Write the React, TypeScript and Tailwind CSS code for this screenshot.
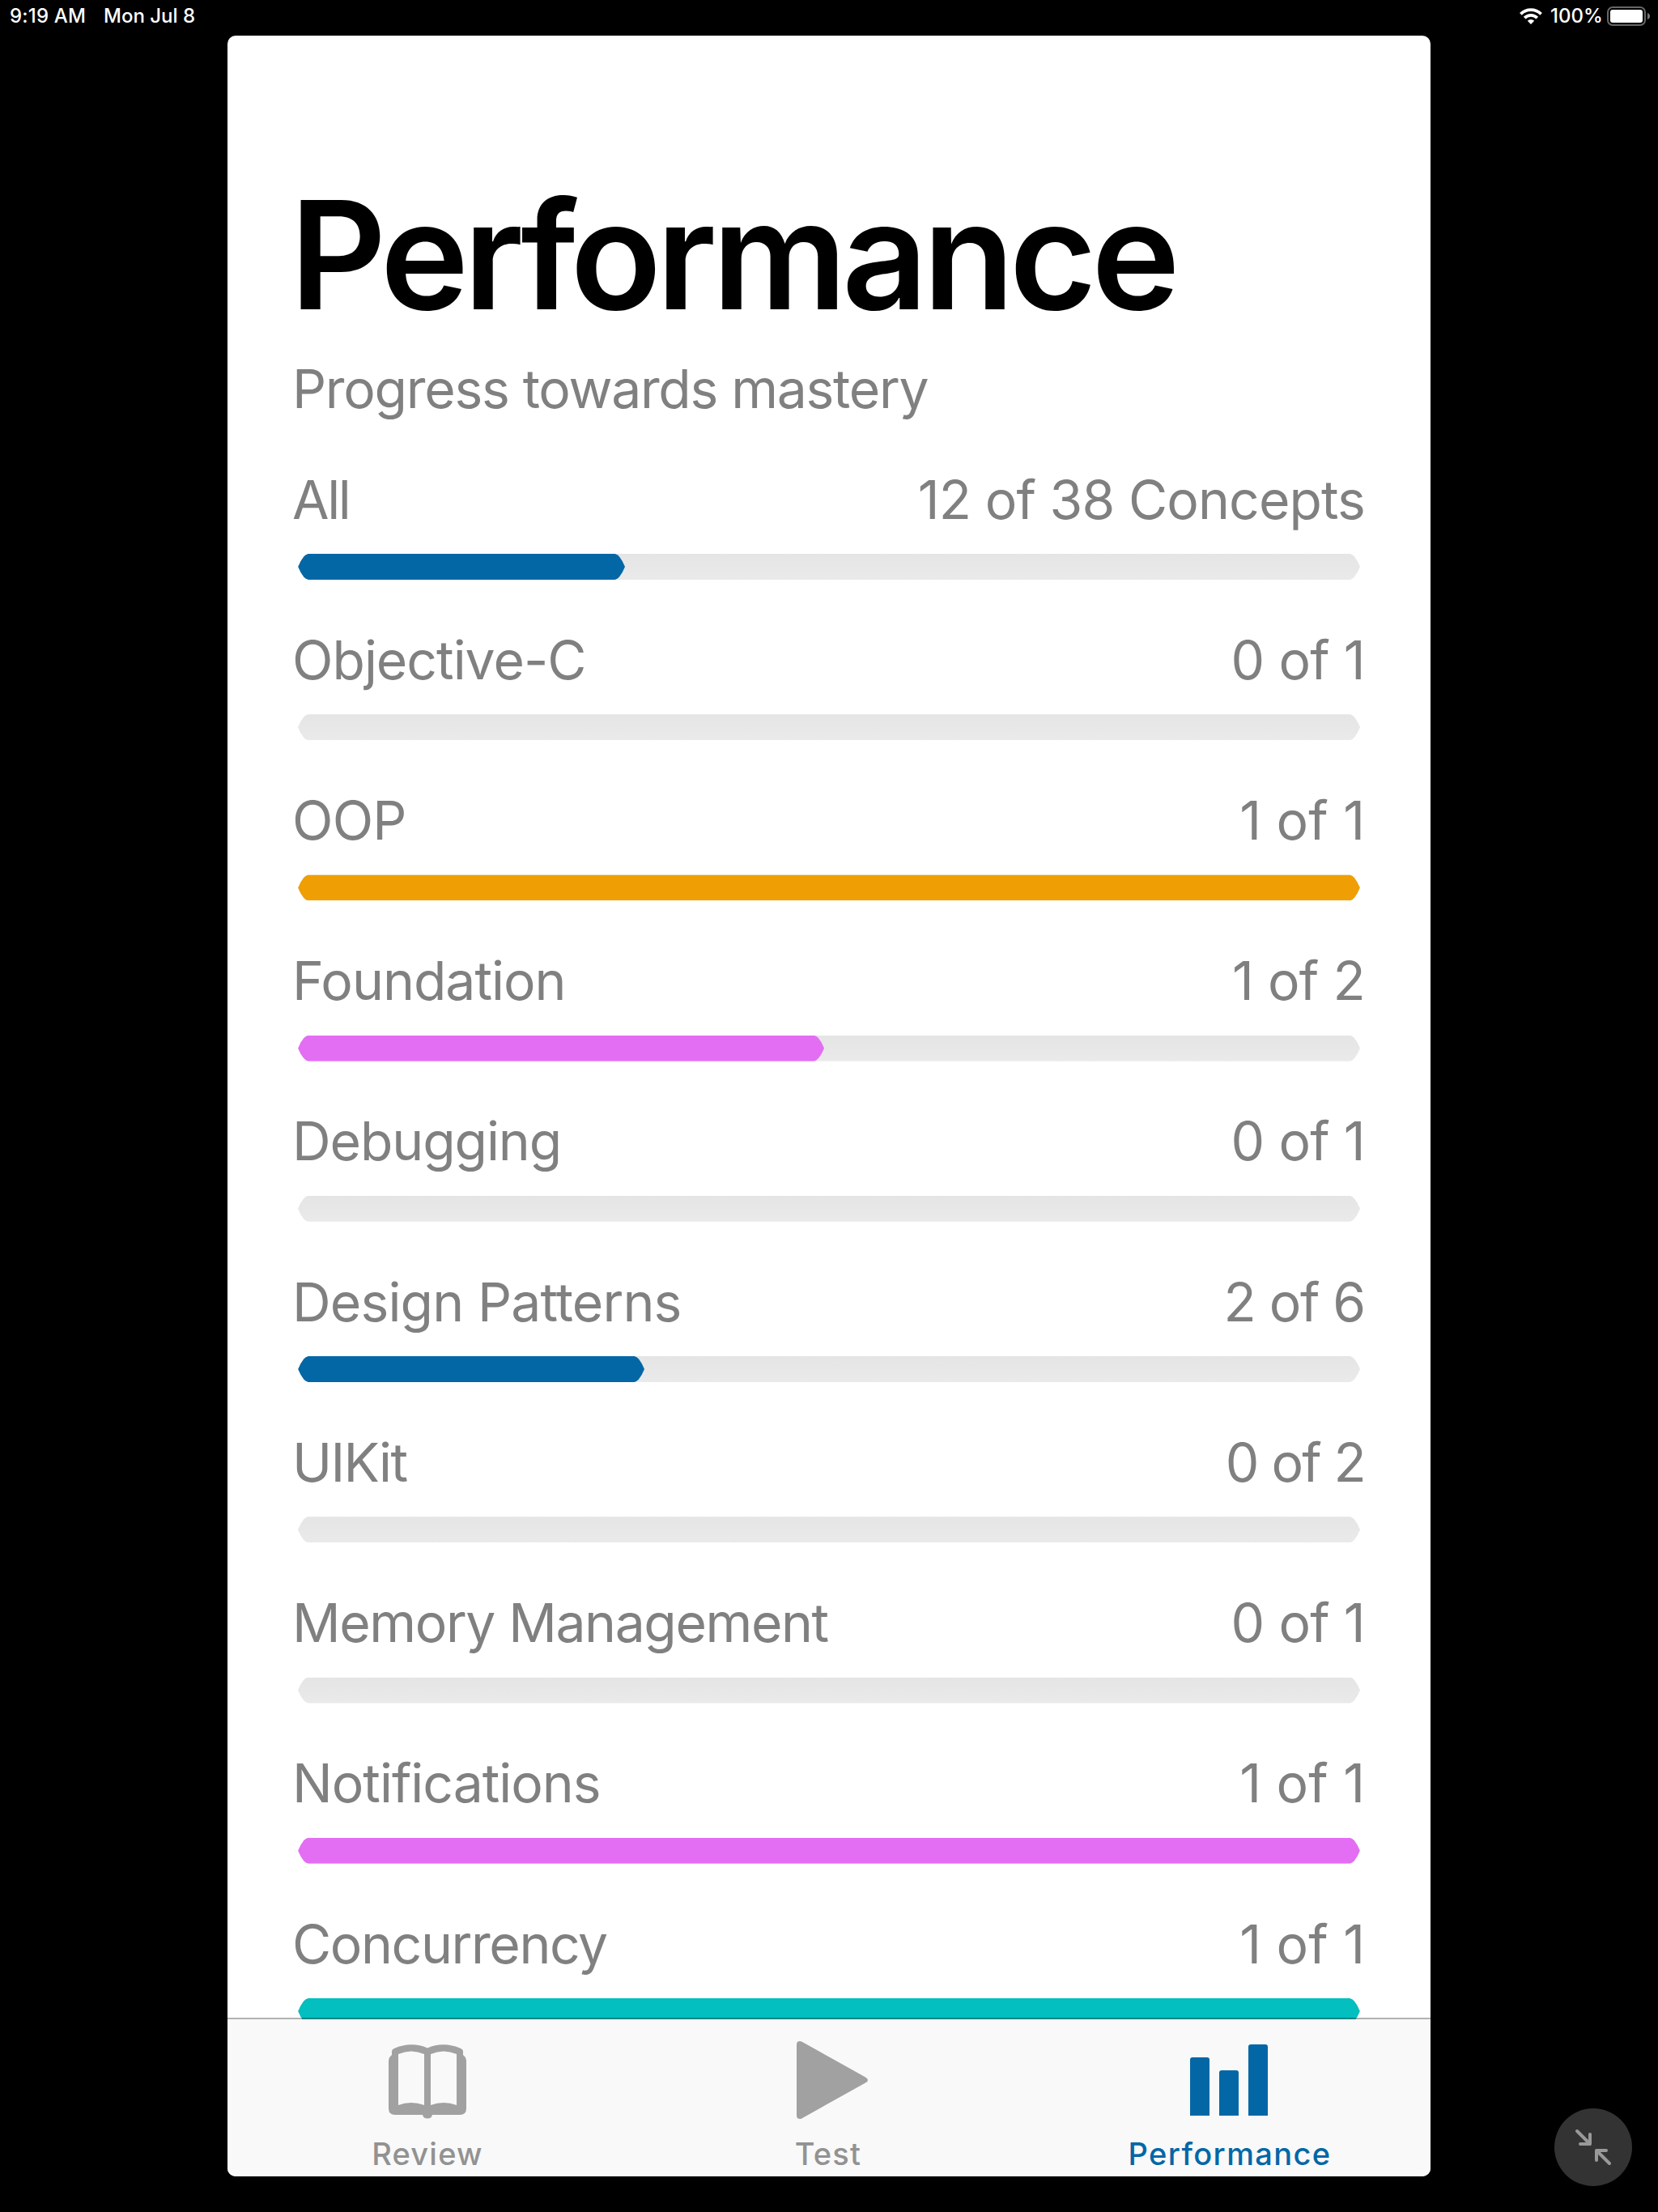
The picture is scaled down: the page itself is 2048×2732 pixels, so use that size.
import React from "react";

type Row = { name: string; score: string; fill: number; color: string; nameFit: string; scoreFit: string };

const rows: Row[] = [
  { name: "All", score: "12 of 38 Concepts", fill: 404, color: "bg-[#0367a6]", nameFit: "tracking-[-2.4px]", scoreFit: "tracking-[-0.9px]" },
  { name: "Objective-C", score: "0 of 1", fill: 0, color: "", nameFit: "tracking-[-1px]", scoreFit: "tracking-[-0.7px]" },
  { name: "OOP", score: "1 of 1", fill: 1312, color: "bg-[#ef9f04]", nameFit: "tracking-[-0.8px]", scoreFit: "" },
  { name: "Foundation", score: "1 of 2", fill: 650, color: "bg-[#e36ef3]", nameFit: "tracking-[-1px]", scoreFit: "tracking-[-0.7px]" },
  { name: "Debugging", score: "0 of 1", fill: 0, color: "", nameFit: "tracking-[-1.1px]", scoreFit: "tracking-[-0.7px]" },
  { name: "Design Patterns", score: "2 of 6", fill: 428, color: "bg-[#0367a6]", nameFit: "tracking-[-0.85px]", scoreFit: "tracking-[-1.3px]" },
  { name: "UIKit", score: "0 of 2", fill: 0, color: "", nameFit: "tracking-[-1.7px]", scoreFit: "tracking-[-1.8px]" },
  { name: "Memory Management", score: "0 of 1", fill: 0, color: "", nameFit: "tracking-[-1.4px]", scoreFit: "tracking-[-0.7px]" },
  { name: "Notifications", score: "1 of 1", fill: 1312, color: "bg-[#e36ef3]", nameFit: "tracking-[-1px]", scoreFit: "" },
  { name: "Concurrency", score: "1 of 1", fill: 1312, color: "bg-[#04bfbf]", nameFit: "tracking-[-1.4px]", scoreFit: "" },
];

const capsule =
  "[clip-path:polygon(0_50%,3.3px_28%,7px_11%,9.5px_4%,12.5px_0,calc(100%-12.5px)_0,calc(100%-9.5px)_4%,calc(100%-7px)_11%,calc(100%-3.3px)_28%,100%_50%,calc(100%-3.3px)_72%,calc(100%-7px)_89%,calc(100%-9.5px)_96%,calc(100%-12.5px)_100%,12.5px_100%,9.5px_96%,7px_89%,3.3px_72%)]";

function ProgressRow({ row }: { row: Row }) {
  return (
    <div className="h-[198.22px] shrink-0">
      <div className="flex h-20 justify-between whitespace-nowrap text-[66px] leading-20 text-[#808080]">
        <span className={row.nameFit}>{row.name}</span>
        <span className={row.scoreFit}>{row.score}</span>
      </div>
      <div className={`mt-[27.4px] ml-[7px] h-8 w-[1312px] bg-linear-to-b from-[#e5e5e5] to-[#eaeaea] ${capsule}`}>
        {row.fill > 0 && <div className={`h-8 ${row.color} ${capsule}`} style={{ width: row.fill }} />}
      </div>
    </div>
  );
}

function StatusBar() {
  return (
    <header className="flex h-[44px] items-start justify-between pr-[10px] pl-3 text-[24px] leading-[39px] font-medium text-white">
      <div className="flex whitespace-nowrap">
        <span className="w-[116px] tracking-[0.2px]">9:19 AM</span>
        <span>Mon Jul 8</span>
      </div>
      <div className="flex">
        <svg className="mt-[10px] mr-[10px]" width="28" height="20" viewBox="0 0 28 20">
          <g fill="none" stroke="#fff" strokeWidth="3.8">
            <path d="M1.4 7.3a17.9 17.9 0 0 1 25.2 0" />
            <path d="M6.2 12.1a11 11 0 0 1 15.6 0" />
          </g>
          <path d="M14 20l-4.2-4.3a6 6 0 0 1 8.4 0z" fill="#fff" />
        </svg>
        <span className="w-[70px] whitespace-nowrap">100%</span>
        <svg className="mt-2" width="53" height="24" viewBox="0 0 53 24">
          <rect x="1" y="1" width="46" height="22" rx="6" fill="none" stroke="#666" strokeWidth="2" />
          <rect x="4" y="4" width="40" height="16" rx="3" fill="#fff" />
          <path d="M50 8c4 1.2 4 6.8 0 8z" fill="#777" />
        </svg>
      </div>
    </header>
  );
}

function BookIcon() {
  return (
    <svg width="96" height="92" viewBox="0 0 96 92">
      <path
        fillRule="evenodd"
        fill="#a1a1a1"
        d="M4 9Q4 6 7 5Q28-4 48 4.500Q68-4 89 5Q92 6 92 9V13Q96 16 96 20V79Q96 87 88 87H54Q53 91.500 48 91.500Q43 91.500 42 87H8Q0 87 0 79V20Q0 16 4 13ZM12 12V75Q28 69 44 75V12Q28 5 12 12ZM52 12V75Q68 69 84 75V12Q68 5 52 12Z"
      />
    </svg>
  );
}

function TabBar() {
  return (
    <nav className="relative -mt-[2px] grid h-[196px] grid-cols-[494px_496px_496px] border-t-2 border-black/30 bg-[#f9f9f9] bg-clip-padding text-[38px] leading-[48px] font-medium tracking-[1.2px] text-[#929292]">
      <div className="flex flex-col items-center">
        <div className="mt-[31px] flex h-[111px] items-start"><BookIcon /></div>
        <span>Review</span>
      </div>
      <div className="flex flex-col items-center">
        <div className="mt-[27px] flex h-[115px] items-start pl-[10px]">
          <svg width="88" height="96" viewBox="0 0 88 96">
            <path d="M0 4Q0 0 4 0Q6 0 8 1.500L85 44.500Q88 46 88 48Q88 50 85 51.500L8 94.500Q6 96 4 96Q0 96 0 92Z" fill="#a1a1a1" />
          </svg>
        </div>
        <span>Test</span>
      </div>
      <div className="flex flex-col items-center text-[#0367a6]">
        <div className="mt-[31px] flex h-[111px] items-start pr-[3px]">
          <svg width="96" height="88" viewBox="0 0 96 88" fill="#0367a6">
            <path d="M0 88V19Q0 16 3 16H21Q24 16 24 19V88Z" />
            <path d="M36 88V35Q36 32 39 32H57Q60 32 60 35V88Z" />
            <path d="M72 88V3Q72 0 75 0H93Q96 0 96 3V88Z" />
          </svg>
        </div>
        <span className="tracking-[1.4px]">Performance</span>
      </div>
    </nav>
  );
}

export default function App() {
  return (
    <div className="relative h-[2732px] w-[2048px] overflow-hidden bg-black font-['Inter',sans-serif]">
      <StatusBar />
      <div className="ml-[281px] h-[2644px] w-[1486px] overflow-hidden rounded-[10px] bg-white">
        <main className="flex h-[2450px] flex-col overflow-hidden pt-[171px] pr-[81px] pl-[80px]">
          <h1 className="-ml-[3px] h-[200px] shrink-0 text-[185px] leading-[201px] font-semibold tracking-[-6.3px] whitespace-nowrap text-black">Performance</h1>
          <p className="mt-[25px] h-20 shrink-0 text-[66px] leading-20 tracking-[-1.3px] whitespace-nowrap text-[#808080]">Progress towards mastery</p>
          <section className="mt-[56.6px] flex flex-col">
            {rows.map((row) => (
              <ProgressRow key={row.name} row={row} />
            ))}
          </section>
        </main>
        <TabBar />
      </div>
      <button className="absolute right-8 bottom-8 size-24 rounded-full bg-[#333]">
        <svg width="96" height="96" viewBox="0 0 96 96" fill="none" stroke="#999" strokeWidth="4" strokeLinecap="round" strokeLinejoin="round">
          <path d="M28 28L44 44M44 32V44H32M68 68L52 52M52 64V52H64" />
        </svg>
      </button>
    </div>
  );
}
